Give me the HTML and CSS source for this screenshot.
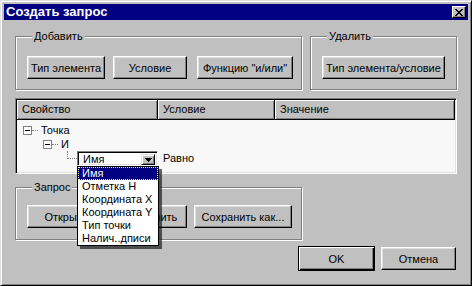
FILE: index.html
```html
<!DOCTYPE html>
<html lang="ru">
<head>
    <meta charset="UTF-8">
    <title>Создать запрос</title>
    <link rel="stylesheet" href="styles.css">
</head>
<body>
    <div class="window">
        <div class="titlebar">
            <span class="title">Создать запрос</span>
            <button class="close-btn" title="Закрыть">
                <svg width="8" height="7" viewBox="0 0 8 7" shape-rendering="crispEdges">
                    <path d="M0 0h2v1h-2zM6 0h2v1h-2zM1 1h2v1h-2zM5 1h2v1h-2zM2 2h4v1h-4zM3 3h2v1h-2zM2 4h4v1h-4zM1 5h2v1h-2zM5 5h2v1h-2zM0 6h2v1h-2zM6 6h2v1h-2z" fill="#000"/>
                </svg>
            </button>
        </div>

        <div class="content">
            <div class="top-row">
                <fieldset class="group group-add">
                    <legend>Добавить</legend>
                    <div class="btn-row">
                        <button class="btn btn-type">Тип элемента</button>
                        <button class="btn btn-cond">Условие</button>
                        <button class="btn btn-func">Функцию "и/или"</button>
                    </div>
                </fieldset>
                <fieldset class="group group-del">
                    <legend>Удалить</legend>
                    <div class="btn-row">
                        <button class="btn btn-del">Тип элемента/условие</button>
                    </div>
                </fieldset>
            </div>

            <div class="listview">
                <div class="lv-header">
                    <div class="lv-col col-prop">Свойство</div>
                    <div class="lv-col col-cond">Условие</div>
                    <div class="lv-col col-val">Значение</div>
                </div>
                <div class="lv-body">
                    <div class="tree-row level-0">
                        <span class="expander"></span>
                        <span class="dots"></span>
                        <span>Точка</span>
                    </div>
                    <div class="tree-row level-1">
                        <span class="expander"></span>
                        <span class="dots"></span>
                        <span>И</span>
                    </div>
                    <div class="tree-row level-2">
                        <span class="connector"></span>
                        <div class="combo">
                            <span class="combo-text">Имя</span>
                            <span class="combo-arrow">
                                <svg width="7" height="4" viewBox="0 0 7 4" shape-rendering="crispEdges">
                                    <path d="M0 0h7v1h-7zM1 1h5v1h-5zM2 2h3v1h-3zM3 3h1v1h-1z" fill="#000"/>
                                </svg>
                            </span>
                            <ul class="dropdown">
                                <li class="selected">Имя</li>
                                <li>Отметка Н</li>
                                <li>Координата X</li>
                                <li>Координата Y</li>
                                <li>Тип точки</li>
                                <li>Налич..дписи</li>
                            </ul>
                        </div>
                        <span class="cond-text">Равно</span>
                    </div>
                </div>
            </div>

            <fieldset class="group group-query">
                <legend>Запрос</legend>
                <div class="btn-row">
                    <button class="btn btn-open">Открыть</button>
                    <button class="btn btn-save">Сохранить</button>
                    <button class="btn btn-saveas">Сохранить как...</button>
                </div>
            </fieldset>

            <div class="dialog-buttons">
                <button class="btn btn-default">OK</button>
                <button class="btn btn-cancel">Отмена</button>
            </div>
        </div>
    </div>
</body>
</html>
```

FILE: styles.css
```css
* {
    box-sizing: border-box;
}
body {
    margin: 0;
    font-family: 'Liberation Sans', Arial, sans-serif;
    font-size: 11px;
    color: #000;
    background-color: #c0c0c0;
}
.window {
    width: 472px;
    height: 286px;
    padding: 3px;
    background-color: #c0c0c0;
    border: 1px solid;
    border-color: #dfdfdf #000 #000 #dfdfdf;
    box-shadow: inset 1px 1px #fff, inset -1px -1px #808080;
}
.titlebar {
    height: 16px;
    display: flex;
    align-items: center;
    justify-content: space-between;
    padding: 0 2px;
    background-color: #000080;
    color: #fff;
}
.title {
    font-weight: bold;
    font-size: 13px;
    line-height: 16px;
}
.close-btn {
    width: 14px;
    height: 12px;
    padding: 0;
    display: flex;
    align-items: center;
    justify-content: center;
    background-color: #c0c0c0;
    border: 1px solid;
    border-color: #fff #000 #000 #fff;
    box-shadow: inset -1px -1px #808080;
}
.content {
    padding: 10px 11px 0;
}
.top-row {
    display: flex;
    gap: 8px;
}
.group {
    margin: 0;
    padding: 0 0 10px 11px;
    border: 1px solid #808080;
    box-shadow: inset 1px 1px #fff, 1px 1px #fff;
}
.group legend {
    margin-left: 5px;
    padding: 0 2px;
    line-height: 12px;
    background-color: #c0c0c0;
}
.group-add {
    width: 287px;
}
.group-del {
    width: 147px;
}
.btn-row {
    display: flex;
    padding-top: 14px;
}
.btn {
    height: 23px;
    padding: 0;
    font-family: inherit;
    font-size: 11px;
    color: #000;
    background-color: #c0c0c0;
    border: 1px solid;
    border-color: #fff #000 #000 #fff;
    box-shadow: inset -1px -1px #808080, inset 1px 1px #dfdfdf;
}
.btn-type, .btn-open {
    width: 78px;
}
.btn-cond, .btn-save {
    width: 74px;
    margin-left: 8px;
}
.btn-func {
    width: 96px;
    margin-left: 10px;
}
.btn-del {
    width: 123px;
}
.btn-saveas {
    width: 98px;
    margin-left: 7px;
}

/* list with tree */
.listview {
    height: 76px;
    margin-top: 8px;
    padding: 1px;
    background-color: #f8f8f8;
    border: 1px solid;
    border-color: #808080 #fff #fff #808080;
    box-shadow: inset 1px 1px #000, inset -1px -1px #dfdfdf;
}
.lv-header {
    display: flex;
    height: 20px;
}
.lv-col {
    padding-left: 5px;
    line-height: 18px;
    background-color: #c0c0c0;
    border-right: 1px solid #000;
    border-bottom: 1px solid #000;
    box-shadow: inset 1px 1px #fff, inset -1px -1px #808080;
}
.col-prop {
    width: 141px;
}
.col-cond {
    width: 117px;
}
.col-val {
    flex: 1;
}
.lv-body {
    padding-top: 3px;
}
.tree-row {
    display: flex;
    align-items: center;
    height: 14px;
}
.level-0 {
    padding-left: 6px;
}
.level-1 {
    padding-left: 26px;
}
.level-2 {
    height: 15px;
    align-items: flex-start;
    padding-left: 50px;
}
.expander {
    position: relative;
    width: 9px;
    height: 9px;
    background-color: #fff;
    border: 1px solid #808080;
}
.expander::after {
    content: '';
    position: absolute;
    left: 1px;
    top: 3px;
    width: 5px;
    height: 1px;
    background-color: #000;
}
.dots {
    width: 6px;
    margin: 0 3px 0 0;
    border-top: 1px dotted #808080;
}
.connector {
    width: 10px;
    height: 8px;
    border-left: 1px dotted #808080;
    border-bottom: 1px dotted #808080;
}
.combo {
    position: relative;
    width: 81px;
    height: 15px;
    display: flex;
    padding: 2px;
    background-color: #fff;
    border: 1px solid;
    border-color: #808080 #fff #fff #808080;
    box-shadow: inset 1px 1px #000, inset -1px -1px #dfdfdf;
}
.combo-text {
    flex: 1;
    padding-left: 3px;
    line-height: 11px;
}
.combo-arrow {
    width: 14px;
    height: 11px;
    display: flex;
    align-items: center;
    justify-content: center;
    background-color: #c0c0c0;
    border: 1px solid;
    border-color: #dfdfdf #000 #000 #dfdfdf;
    box-shadow: inset 1px 1px #fff, inset -1px -1px #808080;
}
.cond-text {
    margin-left: 5px;
    line-height: 15px;
}
.dropdown {
    position: absolute;
    left: -1px;
    top: 14px;
    width: 82px;
    margin: 0;
    padding: 0;
    list-style: none;
    background-color: #fff;
    border: 1px solid #000;
    box-shadow: 3px 3px 0 rgba(0,0,0,0.6);
    z-index: 2;
}
.dropdown li {
    height: 13px;
    line-height: 13px;
    padding-left: 4px;
}
.dropdown li.selected {
    background-color: #000080;
    color: #fff;
    outline: 1px dotted #ffff80;
    outline-offset: -1px;
}

/* bottom part */
.group-query {
    width: 287px;
    margin-top: 7px;
    padding-bottom: 11px;
}
.group-query .btn-row {
    padding-top: 12px;
}
.dialog-buttons {
    display: flex;
    justify-content: flex-end;
    align-items: flex-start;
    margin-top: 6px;
}
.btn-default {
    width: 77px;
    height: 25px;
    border: 1px solid #000;
    box-shadow: inset 1px 1px #fff, inset -1px -1px #000, inset -2px -2px #808080;
}
.btn-cancel {
    width: 75px;
    margin: 1px 1px 0 6px;
}
```
